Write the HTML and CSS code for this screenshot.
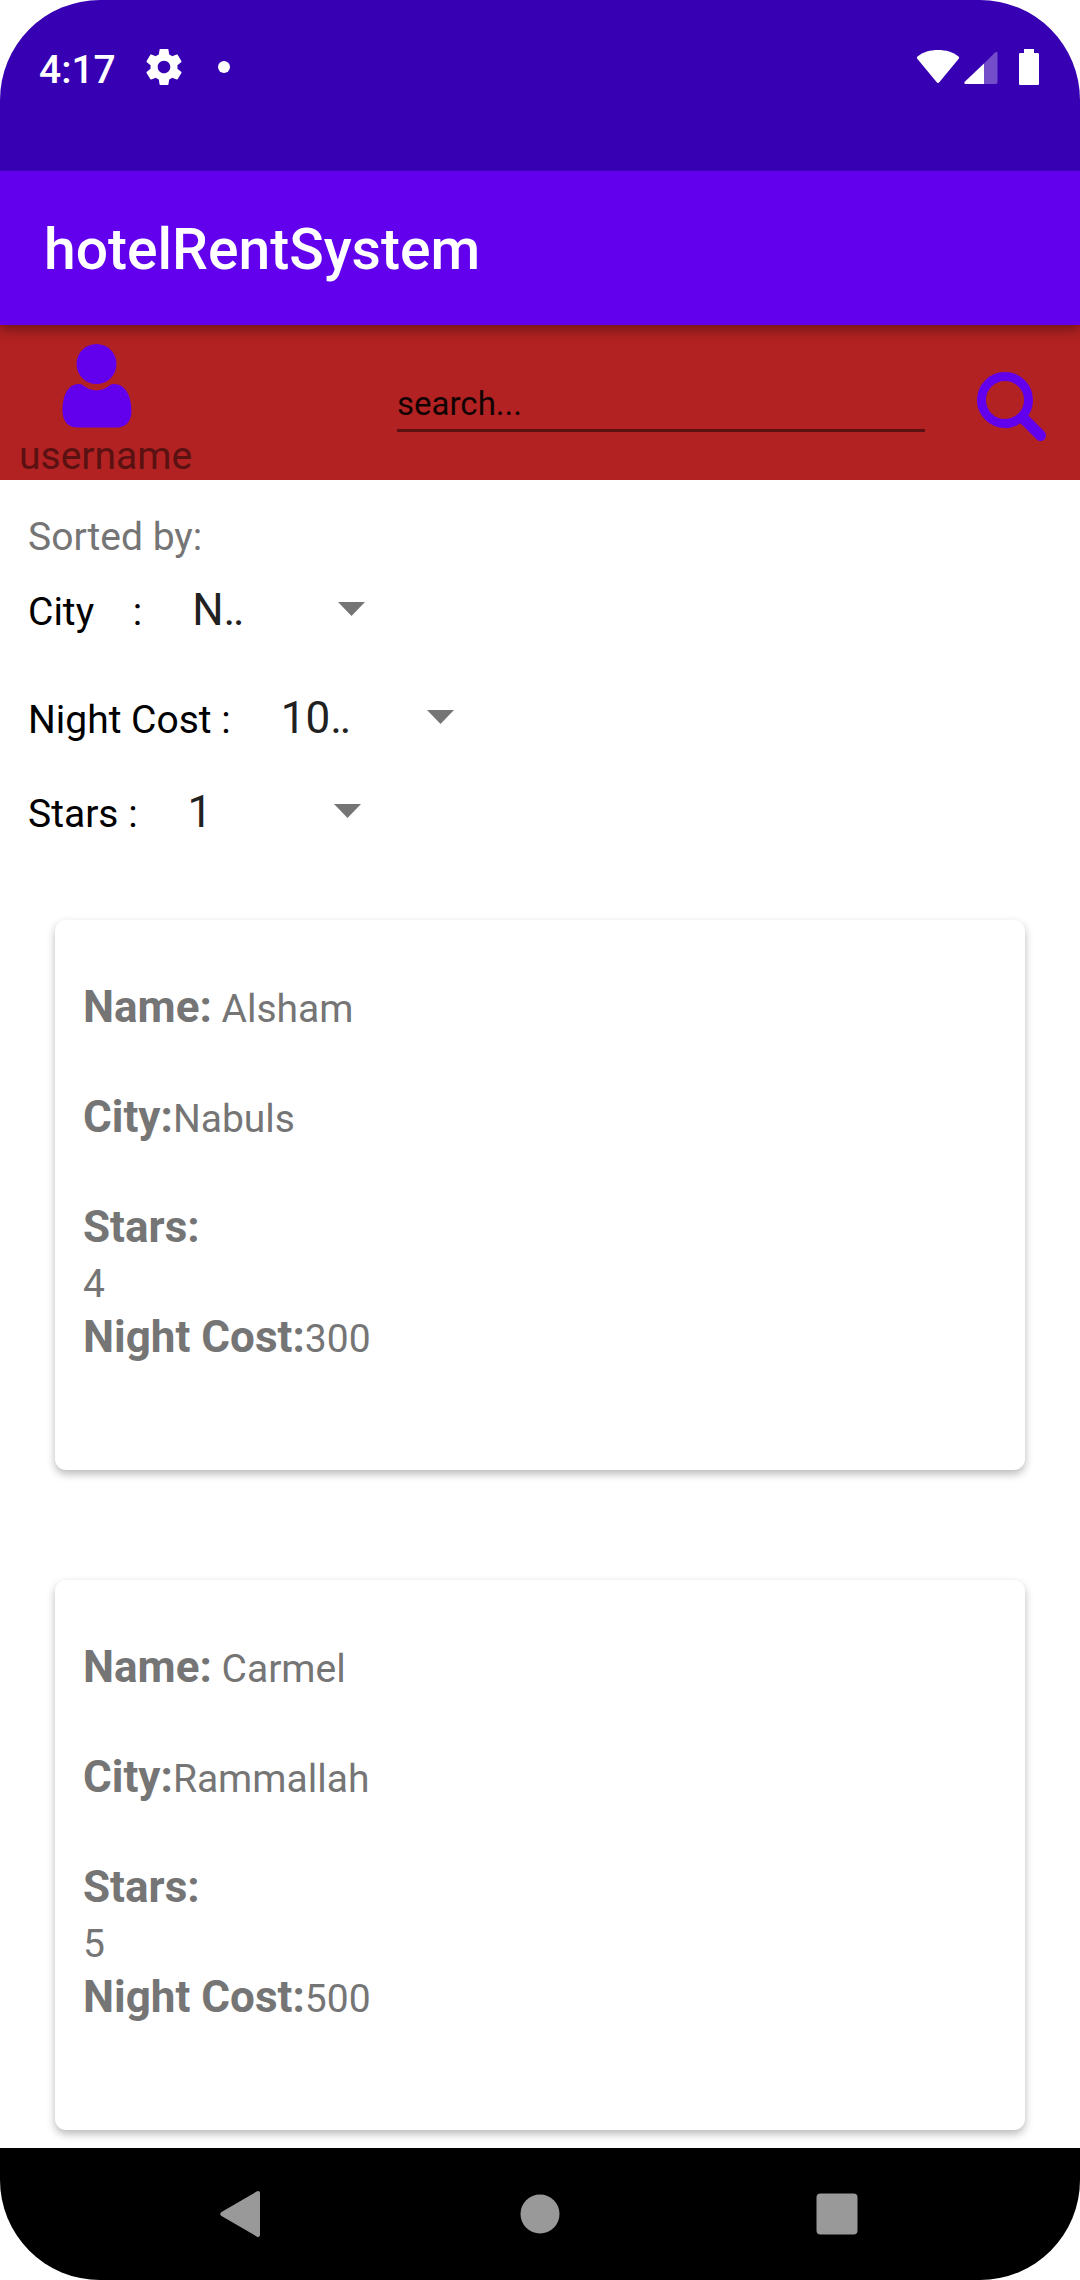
FILE: index.html
```html
<!DOCTYPE html>
<html lang="en">
<head>
<meta charset="utf-8">
<meta name="viewport" content="width=device-width, initial-scale=1">
<title>hotelRentSystem</title>
<link rel="stylesheet" href="styles.css">
</head>
<body>
<div class="device">
  <div class="status-bar">
    <span class="clock">4:17</span>
    <svg class="status-gear" viewBox="2 2 20 20" aria-hidden="true"><path fill="#fff" d="M19.43 12.98c.04-.32.07-.64.07-.98s-.03-.66-.07-.98l2.11-1.65c.19-.15.24-.42.12-.64l-2-3.46c-.12-.22-.39-.3-.61-.22l-2.49 1c-.52-.4-1.08-.73-1.69-.98l-.38-2.65C14.46 2.18 14.25 2 14 2h-4c-.25 0-.46.18-.49.42l-.38 2.65c-.61.25-1.17.59-1.69.98l-2.49-1c-.23-.09-.49 0-.61.22l-2 3.46c-.13.22-.07.49.12.64l2.11 1.65c-.04.32-.07.65-.07.98s.03.66.07.98l-2.11 1.65c-.19.15-.24.42-.12.64l2 3.46c.12.22.39.3.61.22l2.49-1c.52.4 1.08.73 1.69.98l.38 2.65c.03.24.24.42.49.42h4c.25 0 .46-.18.49-.42l.38-2.65c.61-.25 1.17-.59 1.69-.98l2.49 1c.23.09.49 0 .61-.22l2-3.46c.12-.22.07-.49-.12-.64l-2.11-1.65zM12 15.5c-1.930 0-3.500-1.570-3.500-3.500s1.570-3.500 3.500-3.500 3.500 1.570 3.500 3.500-1.570 3.500-3.500 3.500z"/></svg>
    <span class="status-dot"></span>
    <div class="status-right">
      <svg class="wifi" viewBox="0 0 44 36" aria-hidden="true"><path fill="#fff" d="M1.500 7.500C7 3 14 1 22 1s15 2 20.500 6.500c.8.7.8 1.500.2 2.300L23.500 33c-1 1.200-2 1.200-3 0L1.300 9.800c-.6-.8-.6-1.600.2-2.300z"/></svg>
      <svg class="signal" viewBox="0 0 34 36" aria-hidden="true"><path fill="#fff" fill-opacity=".3" d="M20 14.500 31 3.600c1-1 2.500-1 2.500.6V33c0 1.300-.7 2-2 2H20z"/><path fill="#fff" d="M20 14.500V35H1.800C0 35 0 33.500 1 32.400z"/></svg>
      <svg class="battery" viewBox="0 0 20 36" aria-hidden="true"><path fill="#fff" d="M5 0h10v4h3.500c1 0 1.500.5 1.500 1.500v29c0 1-.5 1.500-1.500 1.500h-17C.5 36 0 35.500 0 34.500v-29C0 4.500.5 4 1.500 4H5z"/></svg>
    </div>
  </div>

  <header class="app-bar"><h1 class="app-title">hotelRentSystem</h1></header>

  <form class="toolbar">
    <button class="user" type="button">
      <svg class="user-icon" viewBox="0 0 70 84" aria-hidden="true"><g fill="#6200ee"><circle cx="34.500" cy="20" r="20"/><path d="M17 40c2 0 3 .5 4.500 1.500 9 6.500 17 6.500 26 0 1.500-1 2.500-1.500 4.500-1.500 12 0 17.500 13 17.500 27C69.500 77 64 83.500 55 83.500H15C6 83.500.5 77 .5 67 .5 53 5 40 17 40z"/></g></svg>
      <span>username</span>
    </button>
    <input class="search-field" type="text" placeholder="search..." aria-label="Search">
    <button class="search-button" type="submit" aria-label="Search">
      <svg class="search-icon" viewBox="0 0 70 70" aria-hidden="true"><g fill="none" stroke="#6200ee"><circle cx="28" cy="28" r="23.500" stroke-width="9"/><path d="M46 46 63.500 63.500" stroke-width="11" stroke-linecap="round"/></g></svg>
    </button>
  </form>

  <main class="content">
    <section class="filters">
      <p class="filters-title">Sorted by:</p>
      <div class="filter filter-city">
        <label for="city">City&nbsp;&nbsp;&nbsp; :</label>
        <select id="city" class="spinner"><option>N‥</option></select>
      </div>
      <div class="filter">
        <label for="cost">Night Cost :</label>
        <select id="cost" class="spinner"><option>10‥</option></select>
      </div>
      <div class="filter">
        <label for="stars">Stars :</label>
        <select id="stars" class="spinner"><option>1</option></select>
      </div>
    </section>

    <section class="hotels">
      <article class="card">
        <p><b>Name:</b> Alsham</p>
        <p><b>City:</b>Nabuls</p>
        <p class="stars"><b>Stars:</b><br>4</p>
        <p><b>Night Cost:</b>300</p>
      </article>
      <article class="card">
        <p><b>Name:</b> Carmel</p>
        <p><b>City:</b>Rammallah</p>
        <p class="stars"><b>Stars:</b><br>5</p>
        <p><b>Night Cost:</b>500</p>
      </article>
    </section>
  </main>

  <nav class="nav-bar">
    <button type="button" aria-label="Back"><svg class="nav-icon" viewBox="0 0 46 46" aria-hidden="true"><path fill="#999" d="M1.500 21 36.500.6c2-1.200 3.500-.3 3.500 1.600v41.600c0 1.900-1.500 2.800-3.500 1.600L1.500 25c-1.800-1-1.800-3 0-4z"/></svg></button>
    <button type="button" aria-label="Home"><svg class="nav-icon" viewBox="0 0 46 46" aria-hidden="true"><circle cx="23" cy="23" r="19.500" fill="#999"/></svg></button>
    <button type="button" aria-label="Recent apps"><svg class="nav-icon" viewBox="0 0 46 46" aria-hidden="true"><rect x="2.500" y="2.500" width="41" height="41" rx="4" fill="#999"/></svg></button>
  </nav>
</div>
</body>
</html>
```

FILE: styles.css
```css
* {
  box-sizing: border-box;
}

body {
  margin: 0;
  background: #fff;
  color: #757575;
  font-family: Roboto, "Liberation Sans", sans-serif;
  font-size: 39px;
  line-height: 52px;
}

h1,
p {
  margin: 0;
}

button,
input,
select {
  margin: 0;
  padding: 0;
  border: 0;
  border-radius: 0;
  background: none;
  color: inherit;
  font: inherit;
}

svg {
  display: block;
}

.device {
  display: flex;
  flex-direction: column;
  min-height: 100vh;
  overflow: hidden;
  border-radius: 100px;
}

/* System status bar */
.status-bar {
  z-index: 2;
  display: flex;
  align-items: center;
  padding: 32px 41px 69px 39px;
  height: 171px;
  background: #3700b3;
  color: #fff;
}

.clock {
  padding-top: 6px;
  font-weight: 500;
}

.status-gear {
  width: 36px;
  height: 36px;
  margin-left: 30px;
}

.status-dot {
  width: 12px;
  height: 12px;
  margin-left: 36px;
  border-radius: 50%;
  background: #fff;
}

.status-right {
  display: flex;
  margin-left: auto;
}

.wifi {
  width: 44px;
  height: 36px;
}

.signal {
  width: 34px;
  height: 36px;
  margin-left: 4px;
}

.battery {
  width: 20px;
  height: 36px;
  margin-left: 21px;
}

/* App bar */
.app-bar {
  z-index: 1;
  padding: 46px 44px 42px;
  background: #6200ee;
  box-shadow: 0 4px 12px rgba(0, 0, 0, 0.4);
  color: #fff;
}

.app-title {
  font-size: 57px;
  font-weight: 500;
  line-height: 66px;
}

/* Search toolbar */
.toolbar {
  display: flex;
  height: 155px;
  background: #b22222;
}

.user {
  padding: 19px 0 0 19px;
  color: #591111;
  line-height: 56px;
  text-align: left;
}

.user-icon {
  width: 70px;
  height: 84px;
  margin-left: 43px;
}

.search-field {
  flex: 1;
  height: 56px;
  margin: 51px 52px 0 auto;
  padding-top: 2px;
  max-width: 528px;
  border-bottom: 3px solid #591111;
  font-size: 33px;
  outline: 0;
}

.search-field::placeholder {
  color: #120303;
  opacity: 1;
}

.search-button {
  padding: 47px 33px 38px 0;
}

.search-icon {
  width: 70px;
  height: 70px;
}

/* Filters */
.filters {
  padding: 31px 28px 0;
}

.filter {
  display: flex;
  align-items: baseline;
  height: 94px;
  padding-top: 21px;
  color: #000;
}

.filter-city {
  height: 108px;
}

.spinner {
  width: 223px;
  height: 52px;
  padding-left: 50px;
  appearance: none;
  background: url("data:image/svg+xml,%3Csvg xmlns='http://www.w3.org/2000/svg' width='27' height='14'%3E%3Cpath d='M0 0h27L13.500 14z' fill='%23757575'/%3E%3C/svg%3E") no-repeat right 18px;
  color: #212121;
  font-size: 44px;
  outline: 0;
}

/* Hotel cards */
.hotels {
  display: flex;
  flex-direction: column;
  gap: 110px;
  padding: 61px 55px 18px;
}

.card {
  display: flex;
  flex-direction: column;
  gap: 55px;
  padding: 62px 28px 103px;
  border-radius: 11px;
  background: #fff;
  box-shadow: 0 4px 8px rgba(0, 0, 0, 0.28);
  line-height: 55px;
}

.card .stars {
  margin-bottom: -55px;
}

.card b {
  font-size: 44px;
  line-height: 44px;
}

/* System navigation bar */
.nav-bar {
  display: flex;
  justify-content: center;
  align-items: center;
  gap: 251px;
  height: 132px;
  margin-top: auto;
  background: #000;
}

.nav-icon {
  width: 46px;
  height: 46px;
}
```
